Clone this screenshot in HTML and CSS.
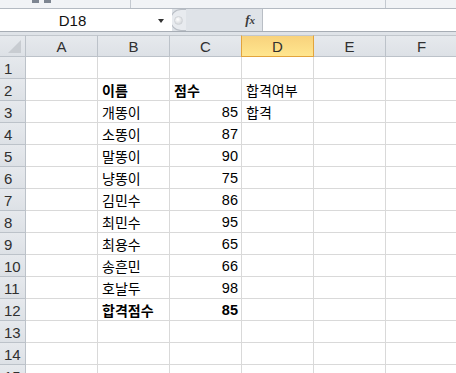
FILE: index.html
```html
<!DOCTYPE html>
<html lang="ko">
<head>
<meta charset="utf-8">
<link rel="stylesheet" href="styles.css">
</head>
<body>
<div class="app">
  <div class="ribbon-edge">
    <div class="rib-group g1"><span class="nub"></span><span class="nub"></span></div>
    <div class="rib-group g2"></div>
    <div class="rib-group g3"></div>
  </div>
  <div class="formula-row">
    <div class="namebox"><span class="ref">D18</span><span class="arrow"></span></div>
    <div class="grip"><span class="knob"></span></div>
    <div class="fx-area"><span class="fx">f<span class="x">x</span></span></div>
    <div class="formula-input"></div>
  </div>
  <div class="gap"></div>
  <div class="sheet">
    <div class="hd corner"><span class="tri"></span></div>
    <div class="hd col">A</div>
    <div class="hd col">B</div>
    <div class="hd col">C</div>
    <div class="hd col active">D</div>
    <div class="hd col">E</div>
    <div class="hd col">F</div>

    <div class="hd row">1</div><div class="c"></div><div class="c"></div><div class="c"></div><div class="c"></div><div class="c"></div><div class="c"></div>
    <div class="hd row">2</div><div class="c"></div><div class="c b">이름</div><div class="c b">점수</div><div class="c">합격여부</div><div class="c"></div><div class="c"></div>
    <div class="hd row">3</div><div class="c"></div><div class="c">개똥이</div><div class="c n">85</div><div class="c">합격</div><div class="c"></div><div class="c"></div>
    <div class="hd row">4</div><div class="c"></div><div class="c">소똥이</div><div class="c n">87</div><div class="c"></div><div class="c"></div><div class="c"></div>
    <div class="hd row">5</div><div class="c"></div><div class="c">말똥이</div><div class="c n">90</div><div class="c"></div><div class="c"></div><div class="c"></div>
    <div class="hd row">6</div><div class="c"></div><div class="c">냥똥이</div><div class="c n">75</div><div class="c"></div><div class="c"></div><div class="c"></div>
    <div class="hd row">7</div><div class="c"></div><div class="c">김민수</div><div class="c n">86</div><div class="c"></div><div class="c"></div><div class="c"></div>
    <div class="hd row">8</div><div class="c"></div><div class="c">최민수</div><div class="c n">95</div><div class="c"></div><div class="c"></div><div class="c"></div>
    <div class="hd row">9</div><div class="c"></div><div class="c">최용수</div><div class="c n">65</div><div class="c"></div><div class="c"></div><div class="c"></div>
    <div class="hd row">10</div><div class="c"></div><div class="c">송흔민</div><div class="c n">66</div><div class="c"></div><div class="c"></div><div class="c"></div>
    <div class="hd row">11</div><div class="c"></div><div class="c">호날두</div><div class="c n">98</div><div class="c"></div><div class="c"></div><div class="c"></div>
    <div class="hd row">12</div><div class="c"></div><div class="c b">합격점수</div><div class="c n b">85</div><div class="c"></div><div class="c"></div><div class="c"></div>
    <div class="hd row">13</div><div class="c"></div><div class="c"></div><div class="c"></div><div class="c"></div><div class="c"></div><div class="c"></div>
    <div class="hd row">14</div><div class="c"></div><div class="c"></div><div class="c"></div><div class="c"></div><div class="c"></div><div class="c"></div>
    <div class="hd row">15</div><div class="c"></div><div class="c"></div><div class="c"></div><div class="c"></div><div class="c"></div><div class="c"></div>
  </div>
</div>
</body>
</html>
```
FILE: styles.css
```css
* { box-sizing: border-box; }
html, body { margin: 0; padding: 0; background: #fff; }
body {
  font-family: "Noto Sans CJK KR", "Liberation Sans", sans-serif;
  font-size: 14px;
  color: #000;
}
.app { width: 456px; height: 373px; overflow: hidden; background: #dfe3e8; }

.ribbon-edge {
  display: flex;
  height: 9px;
  background: #f1f3f6;
  border-bottom: 1px solid #b4bac2;
}
.rib-group { height: 100%; border-right: 1px solid #c4c9d0; }
.g1 { width: 131px; display: flex; gap: 5px; padding-left: 32px; }
.g2 { width: 255px; }
.g3 { flex: 1; border-right: none; }
.nub { width: 7px; height: 3px; background: #7d8591; margin-top: 0; }

.formula-row {
  display: flex;
  height: 23px;
  background: #dfe3e8;
  border-bottom: 1px solid #a7adb5;
}
.namebox {
  width: 172px;
  background: #fff;
  position: relative;
  display: flex;
  align-items: center;
  justify-content: center;
}
.ref { font-family: "Liberation Sans", sans-serif; font-size: 15px; color: #111; margin-left: -27px; }
.arrow {
  position: absolute;
  left: 158px;
  top: 10px;
  width: 0; height: 0;
  border-left: 3.5px solid transparent;
  border-right: 3.5px solid transparent;
  border-top: 4px solid #333;
}
.grip {
  width: 16px;
  margin-left: -2px;
  background: #e8ebef;
  border: 1px solid #b9bec5;
  border-right: none;
  border-radius: 11px 0 0 11px;
  display: flex;
  align-items: center;
  padding-left: 3px;
}
.knob {
  width: 9px; height: 9px; border-radius: 50%;
  background: radial-gradient(circle at 40% 35%, #fff, #c9cdd2);
  border: 1px solid #d0d3d7;
}
.fx-area {
  width: 77px;
  display: flex;
  align-items: center;
  justify-content: flex-end;
  padding-right: 7px;
  border-right: 1px solid #b9bec5;
}
.fx {
  font-family: "Liberation Serif", serif;
  font-style: italic;
  font-weight: bold;
  font-size: 13px;
  color: #3c3c3c;
}
.fx .x { font-size: 11px; }
.formula-input { flex: 1; background: #fff; }

.gap { height: 3px; background: #dfe3e8; }

.sheet {
  display: grid;
  grid-template-columns: 26px repeat(6, 72px);
  grid-auto-rows: 22px;
  background: #fff;
}
.hd {
  background: linear-gradient(#e6e9ed, #dde1e6);
  border-right: 1px solid #bcc2c9;
  border-bottom: 1px solid #bcc2c9;
  color: #303030;
  font-family: "Liberation Sans", sans-serif;
  font-size: 15px;
  display: flex;
  align-items: center;
}
.hd.col { justify-content: center; border-top: 1px solid #c2c7cd; padding-top: 1px; }
.hd.corner { position: relative; border-top: 1px solid #c2c7cd; }
.tri {
  position: absolute;
  right: 4px; bottom: 3px;
  width: 0; height: 0;
  border-left: 13px solid transparent;
  border-bottom: 13px solid #c8ccd1;
}
.hd.active {
  background: linear-gradient(#f8d27c, #ffe68f);
  border-left: 1px solid #e2a43d;
  border-right: 1px solid #e2a43d;
  border-bottom: 1px solid #e2a43d;
  margin-left: -1px;
}
.hd.row { padding-left: 4px; padding-top: 1px; }

.c {
  border-right: 1px solid #d9d9d9;
  border-bottom: 1px solid #d9d9d9;
  display: flex;
  align-items: flex-end;
  padding: 0 3px 1px 4px;
  line-height: 18px;
  white-space: nowrap;
}
.c.n { justify-content: flex-end; font-family: "Liberation Sans", sans-serif; font-size: 14.5px; padding-right: 3px; }
.c.b { font-weight: bold; }
```
